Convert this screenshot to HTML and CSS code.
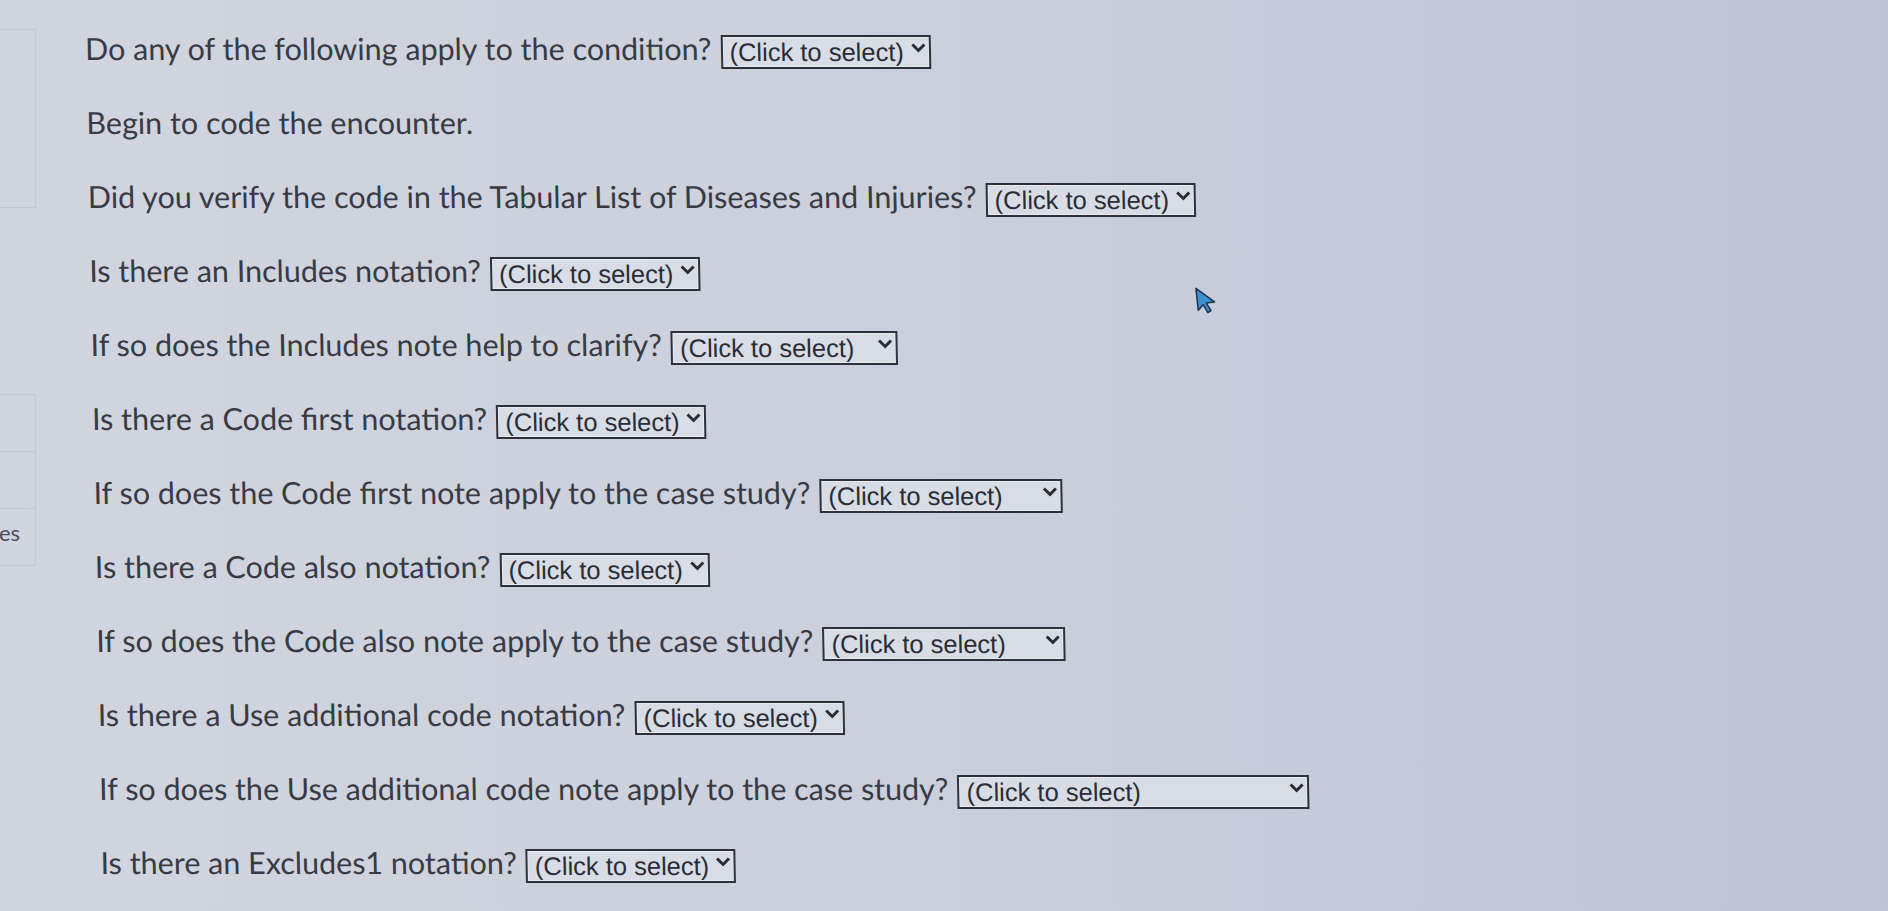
FILE: index.html
```html
<!DOCTYPE html>
<html>
<head>
    <title>Code the encounter</title>
    <link rel="stylesheet" href="styles.css">
</head>
<body>
    <div class="page">
        <aside class="side">
            <div class="side-box"></div>
            <div class="side-list">
                <div class="side-item"></div>
                <div class="side-item"></div>
                <div class="side-item"><span>es</span></div>
            </div>
        </aside>

        <main class="questions">
            <div class="q">
                <label>Do any of the following apply to the condition?</label>
                <span class="pick">
                    <select><option>(Click to select)</option><option>Yes</option><option>No</option></select>
                    <svg class="chev" viewBox="0 0 15 10"><path d="M1.5 1.5 L7.5 7.5 L13.5 1.5"/></svg>
                </span>
            </div>
            <div class="q">
                <label>Begin to code the encounter.</label>
            </div>
            <div class="q">
                <label>Did you verify the code in the Tabular List of Diseases and Injuries?</label>
                <span class="pick">
                    <select><option>(Click to select)</option><option>Yes</option><option>No</option></select>
                    <svg class="chev" viewBox="0 0 15 10"><path d="M1.5 1.5 L7.5 7.5 L13.5 1.5"/></svg>
                </span>
            </div>
            <div class="q">
                <label>Is there an Includes notation?</label>
                <span class="pick">
                    <select><option>(Click to select)</option><option>Yes</option><option>No</option></select>
                    <svg class="chev" viewBox="0 0 15 10"><path d="M1.5 1.5 L7.5 7.5 L13.5 1.5"/></svg>
                </span>
            </div>
            <div class="q">
                <label>If so does the Includes note help to clarify?</label>
                <span class="pick mid">
                    <select><option>(Click to select)</option><option>Yes</option><option>No</option><option>Not applicable</option></select>
                    <svg class="chev" viewBox="0 0 15 10"><path d="M1.5 1.5 L7.5 7.5 L13.5 1.5"/></svg>
                </span>
            </div>
            <div class="q">
                <label>Is there a Code first notation?</label>
                <span class="pick">
                    <select><option>(Click to select)</option><option>Yes</option><option>No</option></select>
                    <svg class="chev" viewBox="0 0 15 10"><path d="M1.5 1.5 L7.5 7.5 L13.5 1.5"/></svg>
                </span>
            </div>
            <div class="q">
                <label>If so does the Code first note apply to the case study?</label>
                <span class="pick wide">
                    <select><option>(Click to select)</option><option>Yes</option><option>No</option><option>Not applicable</option></select>
                    <svg class="chev" viewBox="0 0 15 10"><path d="M1.5 1.5 L7.5 7.5 L13.5 1.5"/></svg>
                </span>
            </div>
            <div class="q">
                <label>Is there a Code also notation?</label>
                <span class="pick">
                    <select><option>(Click to select)</option><option>Yes</option><option>No</option></select>
                    <svg class="chev" viewBox="0 0 15 10"><path d="M1.5 1.5 L7.5 7.5 L13.5 1.5"/></svg>
                </span>
            </div>
            <div class="q">
                <label>If so does the Code also note apply to the case study?</label>
                <span class="pick wide">
                    <select><option>(Click to select)</option><option>Yes</option><option>No</option><option>Not applicable</option></select>
                    <svg class="chev" viewBox="0 0 15 10"><path d="M1.5 1.5 L7.5 7.5 L13.5 1.5"/></svg>
                </span>
            </div>
            <div class="q">
                <label>Is there a Use additional code notation?</label>
                <span class="pick">
                    <select><option>(Click to select)</option><option>Yes</option><option>No</option></select>
                    <svg class="chev" viewBox="0 0 15 10"><path d="M1.5 1.5 L7.5 7.5 L13.5 1.5"/></svg>
                </span>
            </div>
            <div class="q">
                <label>If so does the Use additional code note apply to the case study?</label>
                <span class="pick xwide">
                    <select><option>(Click to select)</option><option>Yes</option><option>No</option><option>Not applicable to this case study</option></select>
                    <svg class="chev" viewBox="0 0 15 10"><path d="M1.5 1.5 L7.5 7.5 L13.5 1.5"/></svg>
                </span>
            </div>
            <div class="q">
                <label>Is there an Excludes1 notation?</label>
                <span class="pick">
                    <select><option>(Click to select)</option><option>Yes</option><option>No</option></select>
                    <svg class="chev" viewBox="0 0 15 10"><path d="M1.5 1.5 L7.5 7.5 L13.5 1.5"/></svg>
                </span>
            </div>
        </main>

        <!-- mouse pointer left on screen -->
        <svg class="pointer" viewBox="0 0 20 27">
            <path d="M2 2 L2 22 L7 17.5 L10.5 25 L13.5 23.6 L10 16.3 L17.5 16 Z"/>
        </svg>
    </div>
</body>
</html>
```

FILE: styles.css
```css
body {
    margin: 0;
    background: linear-gradient(to right, #d1d5df 0%, #cbd0dc 45%, #bfc5d5 100%);
    font-family: Lato, "Open Sans", sans-serif;
    color: #383b44;
}

.page {
    position: relative;
    display: flex;
    height: 911px;
    overflow: hidden;
}

/* sidebar cut off at the left edge */
.side {
    width: 36px;
    flex-shrink: 0;
    display: flex;
    flex-direction: column;
}

.side-box {
    margin-top: 29px;
    height: 177px;
    border: 1px solid #c3c8d3;
    border-left: none;
}

.side-list {
    margin-top: 186px;
    border: 1px solid #c3c8d3;
    border-left: none;
}

.side-item {
    height: 56px;
    display: flex;
    align-items: center;
    font-size: 22px;
    color: #4a4d57;
}

.side-item + .side-item {
    border-top: 1px solid #c3c8d3;
}

.side-item span {
    margin-left: -1px;
    margin-top: -9px;
}

.questions {
    padding: 31px 0 0 48px;
    display: flex;
    flex-direction: column;
    gap: 40px;
    transform: skewX(1.1deg);
    transform-origin: 0 0;
}

.q {
    height: 34px;
    display: flex;
    align-items: center;
    font-size: 30.5px;
    white-space: nowrap;
}

.q label {
    margin-right: 9px;
}

.pick {
    position: relative;
    display: inline-block;
    width: 210px;
    height: 34px;
}

.pick.mid {
    width: 227px;
}

.pick.wide {
    width: 243px;
}

.pick.xwide {
    width: 352px;
}

.pick select {
    appearance: none;
    -webkit-appearance: none;
    width: 100%;
    height: 100%;
    margin: 0;
    padding: 0 22px 0 7px;
    border: 2px solid #2e3139;
    border-radius: 0;
    box-shadow: inset 0 0 0 1px #e6e9f0;
    background: #d8dce5;
    color: #2a2d35;
    font-family: "Liberation Sans", Arial, sans-serif;
    font-size: 25.5px;
    box-sizing: border-box;
}

.chev {
    position: absolute;
    right: 5px;
    top: 12px;
    width: 15px;
    height: 10px;
    pointer-events: none;
}

.chev path {
    fill: none;
    stroke: #2a2d35;
    stroke-width: 3;
}

.pointer {
    position: absolute;
    left: 1195px;
    top: 285px;
    width: 22px;
    height: 30px;
    transform: rotate(-6deg);
}

.pointer path {
    fill: #3a90d2;
    stroke: #1d3550;
    stroke-width: 1.4;
    stroke-linejoin: round;
}
```
